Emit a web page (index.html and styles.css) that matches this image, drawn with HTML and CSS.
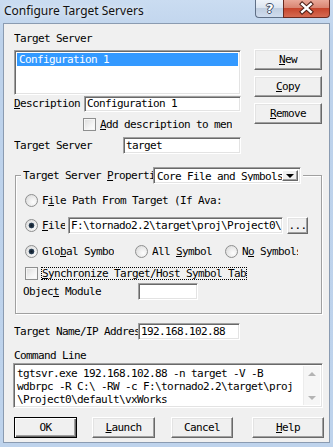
FILE: index.html
```html
<!DOCTYPE html>
<html lang="en">
<head>
    <meta charset="UTF-8">
    <title>Configure Target Servers</title>
    <link rel="stylesheet" href="styles.css">
</head>
<body>
    <div class="window">
        <div class="titlebar">
            <span class="title">Configure Target Servers</span>
            <div class="caption-buttons">
                <span class="cap-btn cap-help">?</span>
                <span class="cap-btn cap-close">
                    <svg width="47" height="17" viewBox="0 0 47 17">
                        <path d="M19 4 L28 12 M28 4 L19 12" stroke="#4a1c14" stroke-width="4.6" stroke-linecap="square"/>
                        <path d="M19 4 L28 12 M28 4 L19 12" stroke="#fff" stroke-width="2.6" stroke-linecap="square"/>
                    </svg>
                </span>
            </div>
        </div>

        <div class="client">
            <div class="top-section">
                <div class="left-col">
                    <div class="label">Target Server</div>
                    <div class="listbox">
                        <div class="list-item selected">Configuration 1</div>
                    </div>
                    <div class="row desc-row">
                        <span class="label desc-label"><u>D</u>escription</span>
                        <span class="edit desc-edit">Configuration 1</span>
                    </div>
                    <div class="row add-desc">
                        <span class="checkbox"></span>
                        <span class="opt-text"><u>A</u>dd description to men</span>
                    </div>
                </div>
                <div class="right-col">
                    <button class="btn side-btn"><u>N</u>ew</button>
                    <button class="btn side-btn"><u>C</u>opy</button>
                    <button class="btn side-btn"><u>R</u>emove</button>
                </div>
            </div>

            <div class="row server-row">
                <span class="label server-label">Target Server</span>
                <span class="edit server-edit">target</span>
            </div>

            <fieldset class="group">
                <legend class="group-head">
                    <span class="label group-label">Target Server <u>P</u>roperti</span>
                    <span class="combo">
                        <span class="combo-text">Core File and Symbols</span>
                        <span class="combo-btn"><span class="arrow-down"></span></span>
                    </span>
                </legend>

                <div class="row g-row1">
                    <span class="radio"></span>
                    <span class="opt-text">F<u>i</u>le Path From Target (If Ava:</span>
                </div>
                <div class="row g-row2">
                    <span class="radio on"></span>
                    <span class="opt-text file-label"><u>F</u>ile</span>
                    <span class="edit path-edit">F:\tornado2.2\target\proj\Project0\</span>
                    <button class="btn dots-btn">...</button>
                </div>
                <div class="row g-row3">
                    <span class="radio-item item-global">
                        <span class="radio on"></span>
                        <span class="opt-text">Glo<u>b</u>al Symbo</span>
                    </span>
                    <span class="radio-item item-all">
                        <span class="radio"></span>
                        <span class="opt-text">All <u>S</u>ymbol</span>
                    </span>
                    <span class="radio-item item-none">
                        <span class="radio"></span>
                        <span class="opt-text">N<u>o</u> Symbols</span>
                    </span>
                </div>
                <div class="row g-row4">
                    <span class="checkbox"></span>
                    <span class="opt-text sync-label"><u>S</u>ynchronize Target/Host Symbol Tab</span>
                </div>
                <div class="row g-row5">
                    <span class="label module-label">Objec<u>t</u> Module</span>
                    <span class="edit module-edit"></span>
                </div>
            </fieldset>

            <div class="row ip-row">
                <span class="label ip-label">Tar<u>g</u>et Name/IP Address</span>
                <span class="edit ip-edit">192.168.102.88</span>
            </div>

            <div class="label cmd-label">Command Line</div>
            <div class="cmd-box">
                <div class="cmd-text">
                    <div class="cmd-line">tgtsvr.exe 192.168.102.88 -n target -V -B</div>
                    <div class="cmd-line">wdbrpc -R C:\ -RW -c F:\tornado2.2\target\proj</div>
                    <div class="cmd-line">\Project0\default\vxWorks</div>
                </div>
                <div class="scrollbar">
                    <span class="sb-arrow up"></span>
                    <span class="sb-arrow down"></span>
                </div>
            </div>

            <div class="row bottom-buttons">
                <button class="btn default-btn ok-btn">OK</button>
                <button class="btn launch-btn"><u>L</u>aunch</button>
                <button class="btn cancel-btn">Cancel</button>
                <button class="btn help-btn"><u>H</u>elp</button>
            </div>
        </div>
    </div>
</body>
</html>
```

FILE: styles.css
```css
* {
    box-sizing: border-box;
    margin: 0;
    padding: 0;
}
body {
    width: 333px;
    height: 447px;
    overflow: hidden;
    font-family: "DejaVu Sans Mono", monospace;
    font-size: 11px;
    letter-spacing: -0.62px;
    line-height: 12px;
    color: #000;
}
u {
    text-underline-offset: 1px;
}
.window {
    width: 333px;
    height: 447px;
    background: linear-gradient(#cadcf1, #bdd2eb 40px, #bed3ec);
    display: flex;
    flex-direction: column;
}
.titlebar {
    height: 23px;
    display: flex;
    justify-content: space-between;
    align-items: flex-start;
}
.title {
    font-family: "Noto Sans", sans-serif;
    font-size: 12px;
    letter-spacing: 0;
    line-height: 16px;
    margin: 3px 0 0 4px;
    color: #111;
    text-shadow: 0 0 6px #fff;
}
.caption-buttons {
    display: flex;
    margin-right: 3px;
}
.cap-btn {
    height: 18px;
    display: flex;
    align-items: center;
    justify-content: center;
    border: 1px solid #5f6f86;
    border-top: none;
}
.cap-help {
    width: 28px;
    border-right: none;
    border-radius: 0 0 0 4px;
    background: linear-gradient(#eef3f9, #dce5f0 45%, #c0cee0 50%, #cfdcee);
    font: bold 13px "DejaVu Sans", sans-serif;
    color: #fff;
    text-shadow: 1px 0 #3b4b62, -1px 0 #3b4b62, 0 1px #3b4b62, 0 -1px #3b4b62;
}
.cap-close {
    width: 47px;
    border-color: #6a2a20;
    border-radius: 0 0 4px 0;
    background: linear-gradient(#e9a898, #d98572 45%, #c6452c 50%, #d56a52);
}
.client {
    flex: 1;
    margin: 0 3px 4px;
    border: 1px solid #8a9bb1;
    background-color: #f0f0f0;
    padding: 9px 0 0 10px;
    overflow: hidden;
}
.label {
    white-space: nowrap;
    overflow: hidden;
}
.row {
    display: flex;
    align-items: center;
}

/* sunken controls */
.edit, .listbox, .combo, .cmd-box {
    background-color: #fff;
    border: 1px solid;
    border-color: #a0a0a0 #fff #fff #a0a0a0;
    box-shadow: inset 1px 1px 0 #696969, inset -1px -1px 0 #e3e3e3;
}
.edit {
    display: flex;
    align-items: center;
    height: 17px;
    padding: 0 2px;
    white-space: nowrap;
    overflow: hidden;
}

/* raised buttons */
.btn {
    font: inherit;
    letter-spacing: inherit;
    color: #000;
    background-color: #f0f0f0;
    height: 21px;
    border: 1px solid;
    border-color: #fff #696969 #696969 #fff;
    box-shadow: inset -1px -1px 0 #a0a0a0, inset 1px 1px 0 #e3e3e3;
    display: flex;
    align-items: center;
    justify-content: center;
}
.default-btn {
    border-color: #000;
    box-shadow: inset 1px 1px 0 #fff, inset -1px -1px 0 #696969, inset -2px -2px 0 #a0a0a0;
}

.radio {
    flex: none;
    width: 13px;
    height: 13px;
    border-radius: 50%;
    border: 1px solid #8e8f8f;
    background: radial-gradient(circle at 65% 65%, #fdfdfd, #e6e6e6 60%, #d2d2d2);
    margin-right: 4px;
}
.radio.on {
    background: radial-gradient(circle, #0e1a26 0, #26384a 2px, #304860 2.6px, transparent 3.2px),
                radial-gradient(circle at 65% 65%, #fdfdfd, #e6e6e6 60%, #d2d2d2);
}
.checkbox {
    flex: none;
    width: 13px;
    height: 13px;
    border: 1px solid #8e8f8f;
    background: linear-gradient(135deg, #dcdcdc, #f4f4f4 60%, #fff);
    box-shadow: inset 0 0 0 1px #f6f6f6;
    margin-right: 4px;
}
.opt-text {
    white-space: nowrap;
    overflow: hidden;
}

/* top section */
.top-section {
    display: flex;
}
.left-col {
    width: 227px;
}
.listbox {
    margin-top: 5px;
    height: 45px;
    padding: 2px;
}
.list-item {
    height: 13px;
    line-height: 13px;
    padding-left: 2px;
}
.list-item.selected {
    background-color: #3399ff;
    color: #fff;
}
.desc-row {
    margin-top: 1px;
}
.desc-label {
    width: 70px;
}
.desc-edit {
    width: 157px;
    height: 16px;
}
.add-desc {
    margin: 6px 0 0 69px;
}
.right-col {
    margin: 16px 0 0 13px;
    display: flex;
    flex-direction: column;
    gap: 6px;
}
.side-btn {
    width: 68px;
}

.server-row {
    margin-top: 6px;
}
.server-label {
    width: 109px;
}
.server-edit {
    width: 118px;
}

/* group box */
.group {
    width: 307px;
    margin: 13px 0 0 1px;
    padding: 0 0 13px 9px;
    border: 1px solid #a0a0a0;
    box-shadow: 1px 1px 0 #fff, inset 1px 1px 0 #fff;
    min-width: 0;
}
.group-head {
    display: flex;
    margin-left: -4px;
    padding: 0 2px;
    background-color: #f0f0f0;
}
.group-label {
    width: 130px;
    line-height: 17px;
}
.combo {
    width: 148px;
    height: 17px;
    padding: 2px;
    display: flex;
}
.combo-text {
    flex: 1;
    line-height: 13px;
    padding-left: 1px;
    white-space: nowrap;
    overflow: hidden;
}
.combo-btn {
    width: 16px;
    background-color: #f0f0f0;
    border: 1px solid;
    border-color: #fff #696969 #696969 #fff;
    box-shadow: inset -1px -1px 0 #a0a0a0;
    display: flex;
    align-items: center;
    justify-content: center;
}
.arrow-down {
    border-left: 4px solid transparent;
    border-right: 4px solid transparent;
    border-top: 4px solid #000;
}
.g-row1 {
    margin-top: 10px;
    height: 13px;
}
.g-row2 {
    margin-top: 10px;
    height: 17px;
}
.file-label {
    width: 23px;
}
.path-edit {
    width: 215px;
    margin-left: 3px;
}
.dots-btn {
    width: 21px;
    height: 17px;
    margin-left: 4px;
}
.g-row3 {
    margin-top: 11px;
    height: 13px;
}
.radio-item {
    display: flex;
    align-items: center;
    overflow: hidden;
}
.item-global {
    width: 110px;
}
.item-all {
    width: 90px;
}
.item-none {
    width: 73px;
}
.g-row4 {
    margin-top: 9px;
    height: 13px;
}
.sync-label {
    width: 206px;
    margin-left: -1px;
    padding-left: 1px;
    outline: 1px dotted #000;
    outline-offset: -1px;
    line-height: 13px;
}
.g-row5 {
    margin-top: 3px;
    height: 17px;
}
.module-label {
    width: 115px;
    margin-left: -2px;
}
.module-edit {
    width: 60px;
}

/* lower part */
.ip-row {
    margin-top: 9px;
}
.ip-label {
    width: 124px;
}
.ip-edit {
    width: 102px;
}
.cmd-label {
    margin-top: 10px;
}
.cmd-box {
    margin: 1px 0 0 -1px;
    width: 310px;
    height: 45px;
    padding: 2px;
    display: flex;
}
.cmd-text {
    flex: 1;
    padding: 1px 0 0 1px;
    line-height: 13px;
    overflow: hidden;
}
.cmd-line {
    white-space: nowrap;
}
.scrollbar {
    width: 17px;
    background-color: #f6f6f6;
    border-left: 1px solid #ececec;
    display: flex;
    flex-direction: column;
    justify-content: space-between;
    align-items: center;
    padding: 6px 0 5px;
}
.sb-arrow {
    border-left: 4px solid transparent;
    border-right: 4px solid transparent;
}
.sb-arrow.up {
    border-bottom: 4px solid #b4b4b4;
}
.sb-arrow.down {
    border-top: 4px solid #b4b4b4;
}
.bottom-buttons {
    margin-top: 9px;
}
.ok-btn {
    width: 63px;
}
.launch-btn {
    width: 63px;
    margin-left: 15px;
}
.cancel-btn {
    width: 62px;
    margin-left: 16px;
}
.help-btn {
    width: 72px;
    margin-left: 19px;
}
```
